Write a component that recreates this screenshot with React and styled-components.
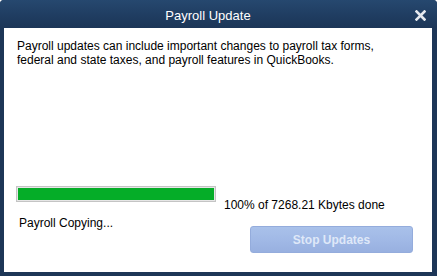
import React from "react";
import styled, { createGlobalStyle } from "styled-components";

const Global = createGlobalStyle`
  html, body {
    margin: 0;
    padding: 0;
    background: #ffffff;
  }
`;

const Window = styled.div`
  width: 437px;
  height: 276px;
  box-sizing: border-box;
  background: #1d3657;
  display: flex;
  flex-direction: column;
  padding: 0 5px 4px 4px;
  border-radius: 4px 4px 0 0;
  font-family: "Liberation Sans", Arial, sans-serif;
`;

const TitleBar = styled.div`
  height: 28px;
  flex: none;
  display: flex;
  align-items: center;
  justify-content: center;
  position: relative;
  margin: 0 -5px 0 -4px;
  padding-right: 21px;
  border-radius: 4px 4px 0 0;
  background: linear-gradient(#26486f, #1f3c60 60%, #1c3657);
`;

const Title = styled.div`
  color: #ffffff;
  font-size: 13px;
  padding-top: 2px;
`;

const Close = styled.svg`
  position: absolute;
  right: 11px;
  top: 10px;
`;

const Content = styled.div`
  flex: 1;
  background: #ffffff;
  display: flex;
  flex-direction: column;
  padding: 11px 12px 0 13px;
`;

const Intro = styled.p`
  margin: 0;
  font-size: 12px;
  line-height: 14px;
  color: #000000;
`;

const ProgressRow = styled.div`
  display: flex;
  align-items: flex-start;
  margin-top: 119px;
  margin-left: -1px;
`;

const Track = styled.div`
  width: 200px;
  height: 16px;
  box-sizing: border-box;
  border: 1px solid #c4c4c4;
  background: #e6e6e6;
  padding: 1px;
`;

const Fill = styled.div`
  height: 100%;
  background: #05ad28;
`;

const Done = styled.div`
  font-size: 12px;
  line-height: 14px;
  color: #000000;
  margin-left: 8px;
  margin-top: 12px;
`;

const StatusRow = styled.div`
  display: flex;
  justify-content: space-between;
  align-items: flex-start;
  margin-top: 4px;
`;

const Status = styled.div`
  font-size: 12px;
  line-height: 14px;
  color: #000000;
  margin-left: 2px;
`;

const StopButton = styled.button`
  width: 163px;
  height: 27px;
  margin-right: 7px;
  margin-top: 10px;
  border: 1px solid #94acdc;
  border-radius: 3px;
  background: linear-gradient(#a9c1ea, #a1b9e6 50%, #98b0e0);
  color: #dfe8f8;
  font-family: "Liberation Sans", Arial, sans-serif;
  font-weight: bold;
  font-size: 12px;
`;

export default function App() {
  const percent = 100;
  return (
    <>
      <Global />
      <Window>
        <TitleBar>
          <Title>Payroll Update</Title>
          <Close width="11" height="11" viewBox="0 0 11 11">
            <path d="M1.5 1.5 L9.5 9.5 M9.5 1.5 L1.5 9.5" stroke="#e4e8ee" strokeWidth="2.6" strokeLinecap="square" />
          </Close>
        </TitleBar>
        <Content>
          <Intro>
            Payroll updates can include important changes to payroll tax forms,
            <br />
            federal and state taxes, and payroll features in QuickBooks.
          </Intro>
          <ProgressRow>
            <Track>
              <Fill style={{ width: `${percent}%` }} />
            </Track>
            <Done>100% of 7268.21 Kbytes done</Done>
          </ProgressRow>
          <StatusRow>
            <Status>Payroll Copying...</Status>
            <StopButton disabled>Stop Updates</StopButton>
          </StatusRow>
        </Content>
      </Window>
    </>
  );
}
